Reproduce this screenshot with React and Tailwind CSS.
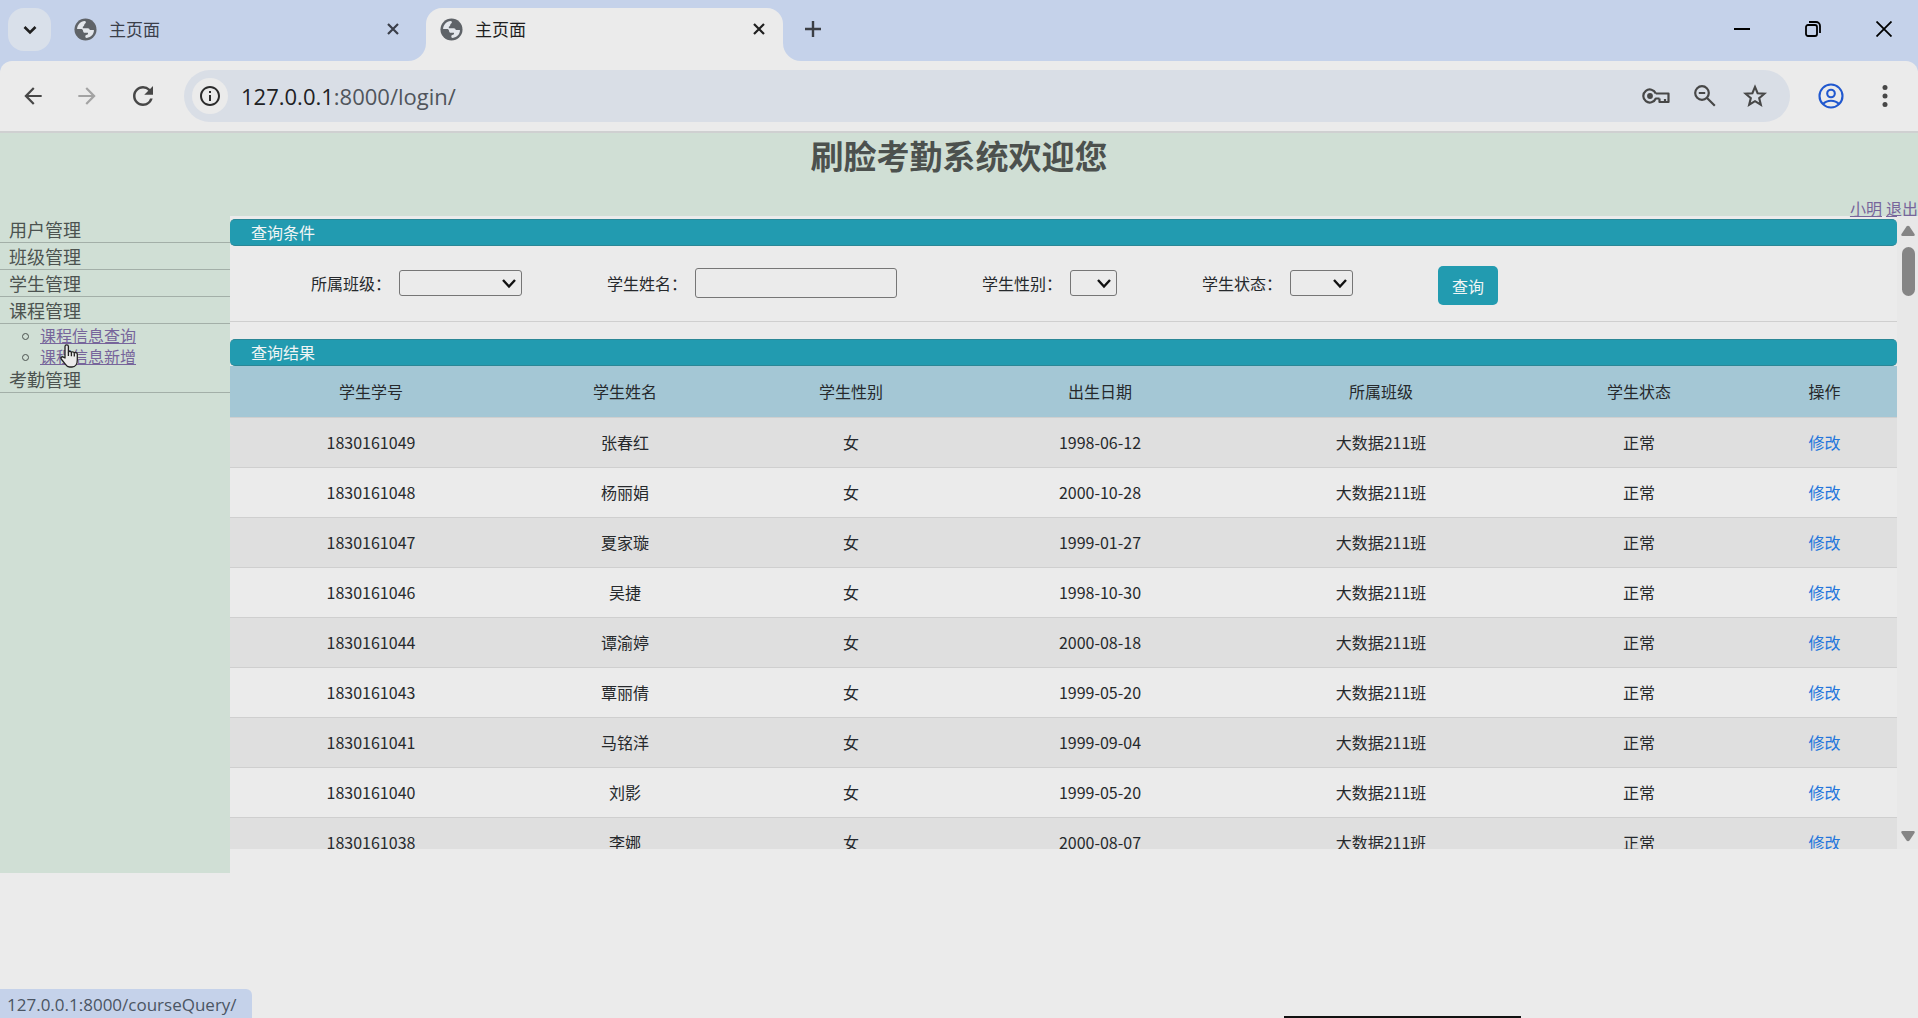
import { useState } from "react"
import { MdArrowBack, MdArrowForward, MdInfoOutline, MdRefresh } from "react-icons/md"

const students = [
  { no: "1830161049", name: "张春红", gender: "女", birthday: "1998-06-12" },
  { no: "1830161048", name: "杨丽娟", gender: "女", birthday: "2000-10-28" },
  { no: "1830161047", name: "夏家璇", gender: "女", birthday: "1999-01-27" },
  { no: "1830161046", name: "吴捷", gender: "女", birthday: "1998-10-30" },
  { no: "1830161044", name: "谭渝婷", gender: "女", birthday: "2000-08-18" },
  { no: "1830161043", name: "覃丽倩", gender: "女", birthday: "1999-05-20" },
  { no: "1830161041", name: "马铭洋", gender: "女", birthday: "1999-09-04" },
  { no: "1830161040", name: "刘影", gender: "女", birthday: "1999-05-20" },
  { no: "1830161038", name: "李娜", gender: "女", birthday: "2000-08-07" },
]

const columns = [
  { title: "学生学号", width: "w-[282px]" },
  { title: "学生姓名", width: "w-[226px]" },
  { title: "学生性别", width: "w-[226px]" },
  { title: "出生日期", width: "w-[272px]" },
  { title: "所属班级", width: "w-[290px]" },
  { title: "学生状态", width: "w-[226px]" },
  { title: "操作", width: "w-[145px]" },
]

const menu = [
  { title: "用户管理" },
  { title: "班级管理" },
  { title: "学生管理" },
  { title: "课程管理", items: ["课程信息查询", "课程信息新增"] },
  { title: "考勤管理" },
]

const CloseIcon = () => (
  <svg className="size-3" viewBox="0 0 12 12" fill="none" stroke="currentColor" strokeWidth="2.2">
    <path d="M1 1l10 10M11 1L1 11" />
  </svg>
)

const GlobeIcon = () => (
  <svg className="size-[23px]" viewBox="0 0 24 24" fill="none">
    <circle cx="12" cy="12" r="11.5" fill="#5f6368" />
    <path
      d="M3.200 11.500C3.400 7.200 6.800 3.600 11 3.200c1.200 0 1.600.8 1.300 1.800-.3 1-1.600 1-1.600 2.200 0 .9-.8 1.400-1.500 1.800v1.800h5.300c1.300 0 1.600.9 2 1.800h4.300c.2 4.200-3 7.800-7.600 8.200-1 0-1.500-.6-1.400-1.500.2-1 .4-1.600 1.700-1.700 1.200-.1 1.300-1.200 1-2.100h-3c-1.400 0-2-.9-2.100-2.200-.1-1.300-1-1.800-2.200-1.800z"
      fill="#e4e7ec"
    />
  </svg>
)

const KeyIcon = () => (
  <svg className="h-4 w-7" viewBox="0 0 28 16" fill="none" stroke="currentColor" strokeWidth="2.2" strokeLinejoin="round">
    <path d="M13.800 5.500A6.500 6.500 0 1 0 13.800 10.500H17.500M13.800 5.500H26.500V14H23V11M17.500 10.500V14H23" />
    <circle cx="8" cy="8" r="2.900" fill="currentColor" stroke="none" />
  </svg>
)

const ZoomOutIcon = () => (
  <svg className="size-[22px]" viewBox="0 0 22 22" fill="none" stroke="currentColor" strokeWidth="2.2">
    <circle cx="8" cy="8" r="6.800" />
    <path d="M4.800 8h6.400M12.800 12.800l8 8" />
  </svg>
)

const StarIcon = () => (
  <svg className="h-6 w-[26px]" viewBox="0 0 24 23" fill="none" stroke="currentColor" strokeWidth="2">
    <path d="M12 2.800l2.500 6 6.500.5-5 4.200 1.600 6.400L12 16.500l-5.600 3.400L8 13.500 3 9.300l6.500-.5z" />
  </svg>
)

const AccountIcon = () => (
  <svg className="size-[26px] text-[#2058cf]" viewBox="0 0 26 26" fill="none" stroke="currentColor" strokeWidth="2.1">
    <circle cx="13" cy="13" r="11.500" />
    <circle cx="13" cy="10.500" r="3.800" />
    <path d="M5 21c2-2.200 4.800-3.300 8-3.300s6 1.100 8 3.300" />
  </svg>
)

const Tab = ({ active }) => (
  <div
    className={
      active
        ? "relative mt-2 flex w-[357px] items-center rounded-t-2xl bg-[#ebebeb] pr-[18px] pb-[11px] pl-[14px] text-[#1f1f1f]"
        : "mt-2 flex w-[367px] items-center pr-[27px] pb-[11px] pl-[15px] text-[#3b3f4a]"
    }
  >
    {active && (
      <>
        <svg className="absolute bottom-0 -left-[18px] size-[18px] text-[#ebebeb]" viewBox="0 0 18 18" fill="currentColor">
          <path d="M18 0v18H0A18 18 0 0 0 18 0z" />
        </svg>
        <svg className="absolute -right-[18px] bottom-0 size-[18px] text-[#ebebeb]" viewBox="0 0 18 18" fill="currentColor">
          <path d="M0 0v18h18A18 18 0 0 1 0 0z" />
        </svg>
      </>
    )}
    <GlobeIcon />
    <span className="ml-3 flex-1 text-[17px] leading-6">主页面</span>
    <button type="button" aria-label="关闭标签页">
      <CloseIcon />
    </button>
  </div>
)

const TabStrip = () => (
  <div className="flex h-[61px] bg-[#c5d2ea]">
    <button
      type="button"
      aria-label="搜索标签页"
      className="mt-2 ml-2 flex size-[43px] items-center justify-center rounded-2xl bg-[#d9e0ea]"
    >
      <svg className="size-[14px]" viewBox="0 0 14 14" fill="none" stroke="#1f1f1f" strokeWidth="2.6">
        <path d="M1.500 4l5.500 5.500L12.500 4" />
      </svg>
    </button>
    <div className="flex pl-2">
      <Tab />
      <Tab active />
    </div>
    <button type="button" aria-label="新标签页" className="mb-[3px] ml-[22px]">
      <svg className="size-4" viewBox="0 0 16 16" stroke="#3c3f45" strokeWidth="2.4">
        <path d="M8 0v16M0 8h16" />
      </svg>
    </button>
    <div className="mr-[26px] mb-[3px] ml-auto flex items-center gap-[55px] text-black">
      <button type="button" aria-label="最小化">
        <svg className="size-4" viewBox="0 0 16 16" stroke="currentColor" strokeWidth="2">
          <path d="M0 8h16" />
        </svg>
      </button>
      <button type="button" aria-label="还原">
        <svg className="size-4" viewBox="0 0 16 16" fill="none" stroke="currentColor" strokeWidth="1.8">
          <rect x="1" y="4" width="11" height="11" rx="2" />
          <path d="M4 1h7a4 4 0 0 1 4 4v7" />
        </svg>
      </button>
      <button type="button" aria-label="关闭">
        <svg className="size-4" viewBox="0 0 16 16" stroke="currentColor" strokeWidth="1.8">
          <path d="M.5.5l15 15M15.500.5l-15 15" />
        </svg>
      </button>
    </div>
  </div>
)

const AddressInput = () => {
  const [url, setUrl] = useState("127.0.0.1:8000/login/")
  const split = url.indexOf(":") === -1 ? url.length : url.indexOf(":")

  return (
    <div className="relative ml-[13px] flex-1 font-['Open_Sans','Noto_Sans_CJK_SC',sans-serif] text-[22px] leading-8">
      {/* the host is drawn darker than the rest, so the input's own text is transparent */}
      <input
        type="text"
        aria-label="地址"
        value={url}
        onChange={(e) => setUrl(e.target.value)}
        className="block w-full bg-transparent text-transparent caret-black outline-none"
      />
      <div aria-hidden="true" className="pointer-events-none absolute inset-0">
        <span className="text-[#202124]">{url.slice(0, split)}</span>
        <span className="text-[#50555c]">{url.slice(split)}</span>
      </div>
    </div>
  )
}

const Toolbar = () => (
  <div className="bg-[#c5d2ea]">
    <div className="flex h-[72px] items-center rounded-t-xl border-b-2 border-[#cfd0d1] bg-[#ebebeb] pr-4 pl-5 text-[#474747]">
      <button type="button" aria-label="后退">
        <MdArrowBack className="size-[26px]" />
      </button>
      <button type="button" aria-label="前进" className="ml-7 text-[#a3a3a3]">
        <MdArrowForward className="size-[26px]" />
      </button>
      <button type="button" aria-label="刷新" className="ml-7">
        <MdRefresh className="size-[30px]" />
      </button>
      <div className="ml-[26px] flex h-[52px] flex-1 items-center rounded-full bg-[#d9dee6] px-2">
        <button type="button" aria-label="网站信息" className="flex size-9 items-center justify-center rounded-full bg-[#ebebeb]">
          <MdInfoOutline className="size-6 text-[#2b2b2b]" />
        </button>
        <AddressInput />
        <div className="flex items-center gap-6 pr-[14px]">
          <button type="button" aria-label="密码">
            <KeyIcon />
          </button>
          <button type="button" aria-label="缩放">
            <ZoomOutIcon />
          </button>
          <button type="button" aria-label="收藏" className="pl-[2px]">
            <StarIcon />
          </button>
        </div>
      </div>
      <button type="button" aria-label="用户" className="ml-7">
        <AccountIcon />
      </button>
      <button type="button" aria-label="菜单" className="ml-6">
        <svg className="size-[34px]" viewBox="0 0 34 34" fill="currentColor">
          <circle cx="17" cy="8.500" r="2.500" />
          <circle cx="17" cy="17" r="2.500" />
          <circle cx="17" cy="25.500" r="2.500" />
        </svg>
      </button>
    </div>
  </div>
)

const HandCursor = () => (
  <svg className="absolute top-5 left-[60px] h-6 w-[19px]" viewBox="0 0 19 24" fill="#ebebeb" stroke="#222" strokeWidth="1.3" strokeLinejoin="round">
    <path d="M5 14V2.500a1.700 1.700 0 0 1 3.400 0V8.500c0-1.500 3-1.500 3 .3 0-1.400 2.900-1.300 2.900.5 0-1.300 3-1.100 3 .9V16c0 3.500-1.800 7-5.300 7H9.500c-2 0-3.200-1.300-4.200-2.800L1.200 15c-1-1.500 1-2.900 2.200-1.800z" />
    <path d="M8.400 8.500v3.500M11.400 9v3.200M14.300 9.500v3" fill="none" />
  </svg>
)

const Sidebar = () => (
  <nav className="min-h-[657px] w-[230px] shrink-0 bg-[#d0dfd5] text-[#4c5350]">
    {menu.map((group) => (
      <div key={group.title}>
        <h2 className="h-[27px] border-b border-[#a3afa8] pl-[9px] text-[18px] leading-[26px]">{group.title}</h2>
        {group.items && (
          <ul className="relative pl-10">
            {group.items.map((item) => (
              <li key={item} className="flex h-[21px] items-center">
                <span className="-ml-[18px] mt-1 mr-[11px] size-[7px] rounded-full border border-[#4c5350]"></span>
                <a href="#" className="text-base leading-5 text-[#77659b] underline">
                  {item}
                </a>
              </li>
            ))}
            <HandCursor />
          </ul>
        )}
      </div>
    ))}
  </nav>
)

const SectionTitle = ({ children }) => (
  <h3 className="rounded-[5px] border-y border-[#2b8796] bg-[#229bb0] pl-[21px] text-base leading-[25px] text-[#f0f5f5]">
    {children}
  </h3>
)

const SelectField = ({ id, label, width, options }) => (
  <div className="mb-[6px] flex items-center gap-2">
    <label htmlFor={id}>{label}</label>
    <div className="relative flex">
      <select id={id} className={`${width} h-[26px] appearance-none rounded-[3px] border border-[#767676] bg-transparent`}>
        <option></option>
        {options.map((option) => (
          <option key={option}>{option}</option>
        ))}
      </select>
      <svg
        className="pointer-events-none absolute top-2 right-[6px] size-[14px]"
        viewBox="0 0 14 14"
        fill="none"
        stroke="#111"
        strokeWidth="2.4"
      >
        <path d="M1 2l6 6.500L13 2" />
      </svg>
    </div>
  </div>
)

const SearchForm = () => {
  const [name, setName] = useState("")

  return (
    <form
      onSubmit={(e) => e.preventDefault()}
      className="mb-[17px] flex items-center gap-[85px] border-b border-[#cfcfcf] pt-5 pb-4 pl-[81px] whitespace-nowrap"
    >
      <SelectField id="class" label="所属班级：" width="w-[123px]" options={["大数据211班"]} />
      <div className="mb-[6px] flex items-center gap-2">
        <label htmlFor="name">学生姓名：</label>
        <input
          type="text"
          id="name"
          value={name}
          onChange={(e) => setName(e.target.value)}
          className="h-[30px] w-[202px] rounded-[3px] border border-[#767676] px-1"
        />
      </div>
      <SelectField id="gender" label="学生性别：" width="w-[47px]" options={["男", "女"]} />
      <SelectField id="status" label="学生状态：" width="w-[63px]" options={["正常"]} />
      <button type="submit" className="h-[39px] w-[60px] rounded-[5px] bg-[#229bb0] text-[#f0f5f5]">
        查询
      </button>
    </form>
  )
}

const StudentTable = () => (
  <table className="w-full table-fixed border-collapse text-center">
    <thead className="bg-[#a4c7d5]">
      <tr className="h-[51px] border-b border-[#cfcfcf]">
        {columns.map((col) => (
          <th key={col.title} className={`${col.width} font-normal`}>
            {col.title}
          </th>
        ))}
      </tr>
    </thead>
    <tbody>
      {students.map((s) => (
        <tr key={s.no} className="h-[50px] border-b border-[#cfcfcf] odd:bg-[#dfdfdf]">
          <td>{s.no}</td>
          <td>{s.name}</td>
          <td>{s.gender}</td>
          <td>{s.birthday}</td>
          <td>大数据211班</td>
          <td>正常</td>
          <td>
            <a href="#" className="text-[#2376dc]">
              修改
            </a>
          </td>
        </tr>
      ))}
    </tbody>
  </table>
)

const Scrollbar = () => (
  <div className="flex w-[21px] shrink-0 flex-col items-center bg-[#e8e8e8] pt-[9px] pb-[6px] pl-px text-[#858585]">
    <svg className="h-3 w-[14px]" viewBox="0 0 14 12" fill="currentColor">
      <path d="M5.500 1.500q1.500-1.500 3 0L13.500 9q.8 2-1 2H1.500q-1.800 0-1-2z" />
    </svg>
    <div className="mt-[10px] h-[49px] w-[13px] rounded-full bg-[#858585]"></div>
    <svg className="mt-auto h-3 w-[14px]" viewBox="0 0 14 12" fill="currentColor">
      <path d="M5.500 9.500q1.500 1.500 3 0L13.500 2q.8-2-1-2H1.500q-1.800 0-1 2z" />
    </svg>
  </div>
)

const App = () => {
  return (
    <div className="relative flex min-h-screen flex-col overflow-hidden bg-[#ebebeb] font-['Noto_Sans_CJK_SC',sans-serif] text-base text-[#26292c]">
      <TabStrip />
      <Toolbar />

      <header className="flex h-[83px] flex-col justify-between bg-[#d0dfd5]">
        <h1 className="text-center text-[33px] leading-[44px] font-bold text-[#4c514e]">刷脸考勤系统欢迎您</h1>
        <div className="flex justify-end gap-1 leading-4 text-[#77659b] underline">
          <a href="#">小明</a>
          <a href="#">退出</a>
        </div>
      </header>

      <div className="flex items-start">
        <Sidebar />
        <main className="flex h-[633px] min-w-0 flex-1">
          <div className="min-w-0 flex-1 overflow-y-auto pt-[3px] [scrollbar-width:none]">
            <SectionTitle>查询条件</SectionTitle>
            <SearchForm />
            <SectionTitle>查询结果</SectionTitle>
            <StudentTable />
          </div>
          <Scrollbar />
        </main>
      </div>

      <div className="absolute bottom-0 left-0 rounded-tr-md bg-[#c5d2ea] pt-[2px] pr-[15px] pl-[7px] font-['Open_Sans',sans-serif] text-[17px] leading-[27px] text-[#4b5563]">
        127.0.0.1:8000/courseQuery/
      </div>
      <div className="absolute right-[397px] bottom-0 h-[2px] w-[237px] bg-[#111]"></div>
    </div>
  )
}

export default App
